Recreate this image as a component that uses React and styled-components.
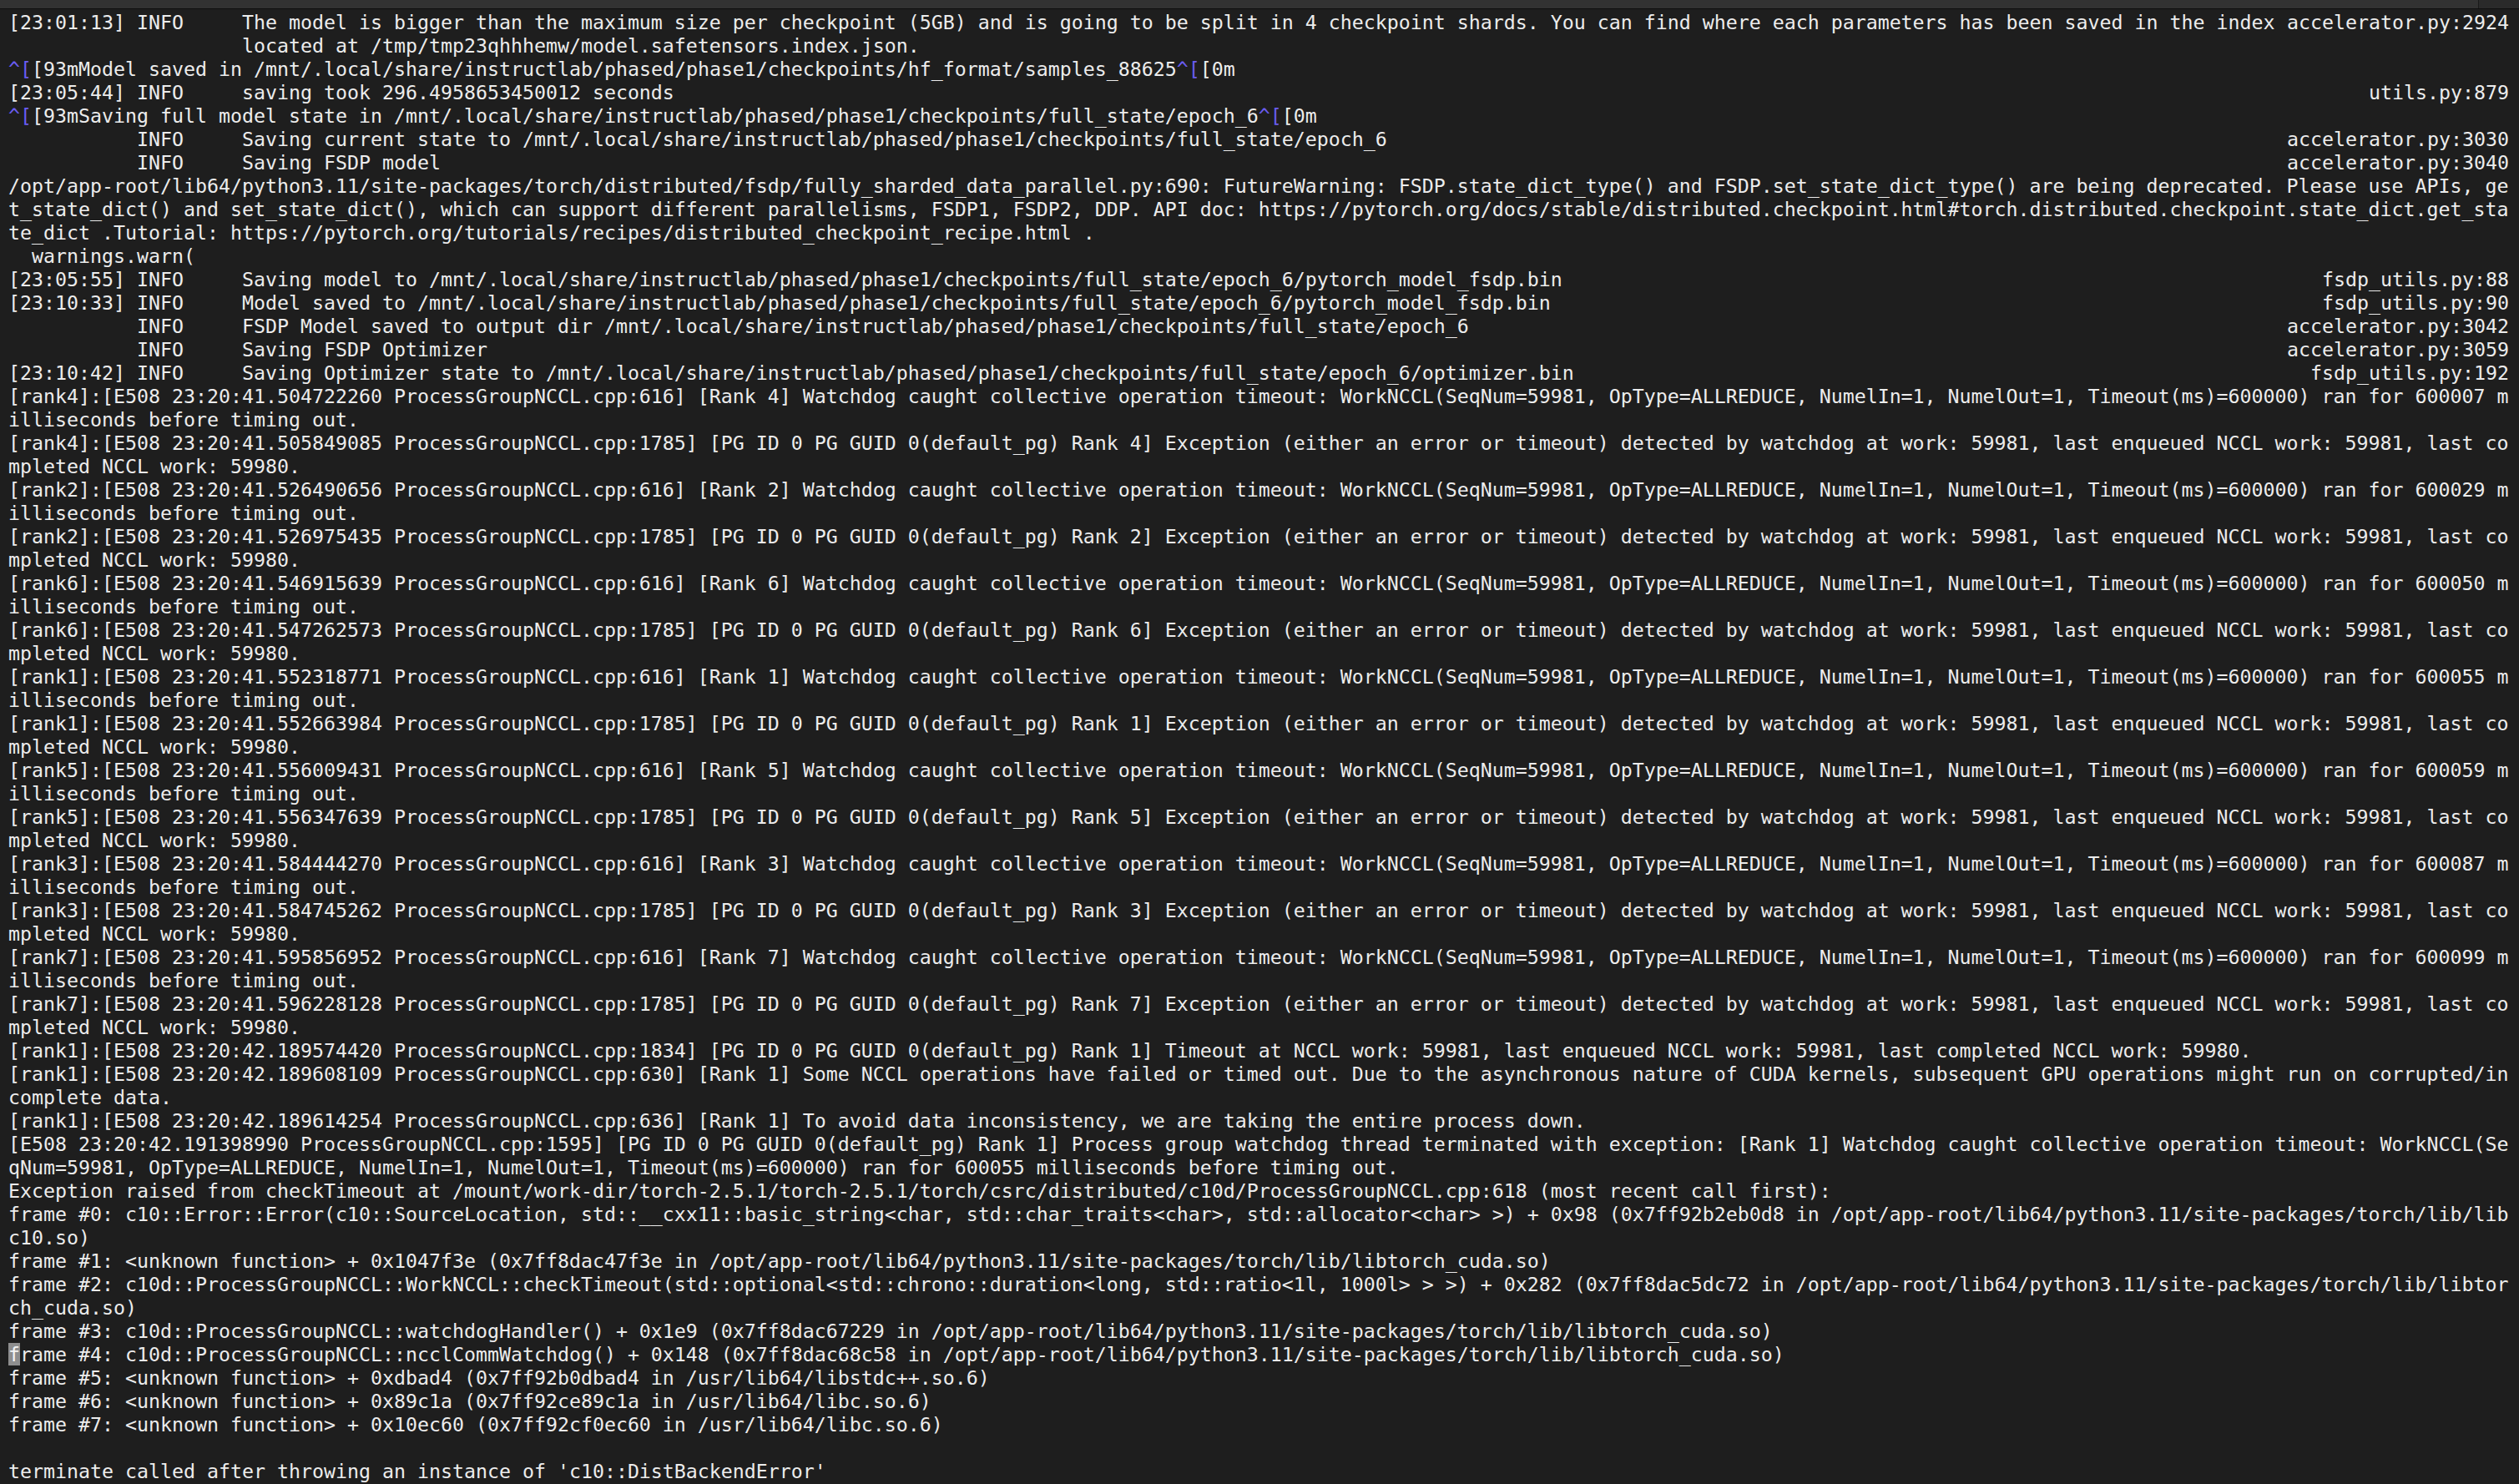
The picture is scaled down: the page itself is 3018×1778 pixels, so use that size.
import React from "react";
import styled, { createGlobalStyle } from "styled-components";

const GlobalStyle = createGlobalStyle`
  html, body {
    margin: 0;
    padding: 0;
    background: #1e1e1e;
  }
`;

const Window = styled.div`
  width: 100vw;
  height: 100vh;
  display: flex;
  flex-direction: column;
  background: #1e1e1e;
  overflow: hidden;
`;

const TitleBar = styled.div`
  display: flex;
  height: 10px;
  flex: none;
  border-bottom: 1px solid #0e0e0e;
`;

const BarMain = styled.div`
  flex: 1;
  background: #323232;
`;

const BarSide = styled.div`
  width: 48px;
  background: #2a2a2a;
  border-left: 1px solid #1a1a1a;
`;

const Terminal = styled.div`
  padding: 2px 12px 0 10px;
  font-family: "DejaVu Sans Mono", "Liberation Mono", monospace;
  font-size: 23.25px;
  line-height: 28px;
  color: #ececec;
`;

const Screen = styled.div`
  width: 2996px;
  display: flex;
  flex-direction: column;
`;

const Line = styled.div`
  height: 28px;
  white-space: pre;
  display: flex;
  justify-content: space-between;
`;

const Ctrl = styled.span`
  color: #6a5cf0;
`;

const Cursor = styled.span`
  background: #8e8e8e;
  color: #f4f4f4;
`;

const Esc = ({ children }) => (
  <>
    <Ctrl>^[</Ctrl>
    {children}
  </>
);

const ranks = [
  ["4", "504722260", "600007", "505849085"],
  ["2", "526490656", "600029", "526975435"],
  ["6", "546915639", "600050", "547262573"],
  ["1", "552318771", "600055", "552663984"],
  ["5", "556009431", "600059", "556347639"],
  ["3", "584444270", "600087", "584745262"],
  ["7", "595856952", "600099", "596228128"],
];

const P = "/mnt/.local/share/instructlab/phased/phase1/checkpoints";
const LIB = "/opt/app-root/lib64/python3.11/site-packages/torch/lib";

const head = [
  { l: "[23:01:13] INFO     The model is bigger than the maximum size per checkpoint (5GB) and is going to be split in 4 checkpoint shards. You can find where each parameters has been saved in the index", r: "accelerator.py:2924" },
  { l: "                    located at /tmp/tmp23qhhhemw/model.safetensors.index.json." },
  { node: <><Esc>[93mModel saved in {P}/hf_format/samples_88625</Esc><Esc>[0m</Esc></> },
  { l: "[23:05:44] INFO     saving took 296.4958653450012 seconds", r: "utils.py:879" },
  { node: <><Esc>[93mSaving full model state in {P}/full_state/epoch_6</Esc><Esc>[0m</Esc></> },
  { l: `           INFO     Saving current state to ${P}/full_state/epoch_6`, r: "accelerator.py:3030" },
  { l: "           INFO     Saving FSDP model", r: "accelerator.py:3040" },
  { l: "/opt/app-root/lib64/python3.11/site-packages/torch/distributed/fsdp/fully_sharded_data_parallel.py:690: FutureWarning: FSDP.state_dict_type() and FSDP.set_state_dict_type() are being deprecated. Please use APIs, ge" },
  { l: "t_state_dict() and set_state_dict(), which can support different parallelisms, FSDP1, FSDP2, DDP. API doc: https://pytorch.org/docs/stable/distributed.checkpoint.html#torch.distributed.checkpoint.state_dict.get_sta" },
  { l: "te_dict .Tutorial: https://pytorch.org/tutorials/recipes/distributed_checkpoint_recipe.html ." },
  { l: "  warnings.warn(" },
  { l: `[23:05:55] INFO     Saving model to ${P}/full_state/epoch_6/pytorch_model_fsdp.bin`, r: "fsdp_utils.py:88" },
  { l: `[23:10:33] INFO     Model saved to ${P}/full_state/epoch_6/pytorch_model_fsdp.bin`, r: "fsdp_utils.py:90" },
  { l: `           INFO     FSDP Model saved to output dir ${P}/full_state/epoch_6`, r: "accelerator.py:3042" },
  { l: "           INFO     Saving FSDP Optimizer", r: "accelerator.py:3059" },
  { l: `[23:10:42] INFO     Saving Optimizer state to ${P}/full_state/epoch_6/optimizer.bin`, r: "fsdp_utils.py:192" },
];

const rankLines = ranks.flatMap(([r, t1, ms, t2]) => [
  { l: `[rank${r}]:[E508 23:20:41.${t1} ProcessGroupNCCL.cpp:616] [Rank ${r}] Watchdog caught collective operation timeout: WorkNCCL(SeqNum=59981, OpType=ALLREDUCE, NumelIn=1, NumelOut=1, Timeout(ms)=600000) ran for ${ms} m` },
  { l: "illiseconds before timing out." },
  { l: `[rank${r}]:[E508 23:20:41.${t2} ProcessGroupNCCL.cpp:1785] [PG ID 0 PG GUID 0(default_pg) Rank ${r}] Exception (either an error or timeout) detected by watchdog at work: 59981, last enqueued NCCL work: 59981, last co` },
  { l: "mpleted NCCL work: 59980." },
]);

const tail = [
  { l: "[rank1]:[E508 23:20:42.189574420 ProcessGroupNCCL.cpp:1834] [PG ID 0 PG GUID 0(default_pg) Rank 1] Timeout at NCCL work: 59981, last enqueued NCCL work: 59981, last completed NCCL work: 59980." },
  { l: "[rank1]:[E508 23:20:42.189608109 ProcessGroupNCCL.cpp:630] [Rank 1] Some NCCL operations have failed or timed out. Due to the asynchronous nature of CUDA kernels, subsequent GPU operations might run on corrupted/in" },
  { l: "complete data." },
  { l: "[rank1]:[E508 23:20:42.189614254 ProcessGroupNCCL.cpp:636] [Rank 1] To avoid data inconsistency, we are taking the entire process down." },
  { l: "[E508 23:20:42.191398990 ProcessGroupNCCL.cpp:1595] [PG ID 0 PG GUID 0(default_pg) Rank 1] Process group watchdog thread terminated with exception: [Rank 1] Watchdog caught collective operation timeout: WorkNCCL(Se" },
  { l: "qNum=59981, OpType=ALLREDUCE, NumelIn=1, NumelOut=1, Timeout(ms)=600000) ran for 600055 milliseconds before timing out." },
  { l: "Exception raised from checkTimeout at /mount/work-dir/torch-2.5.1/torch-2.5.1/torch/csrc/distributed/c10d/ProcessGroupNCCL.cpp:618 (most recent call first):" },
  { l: `frame #0: c10::Error::Error(c10::SourceLocation, std::__cxx11::basic_string<char, std::char_traits<char>, std::allocator<char> >) + 0x98 (0x7ff92b2eb0d8 in ${LIB}/lib` },
  { l: "c10.so)" },
  { l: `frame #1: <unknown function> + 0x1047f3e (0x7ff8dac47f3e in ${LIB}/libtorch_cuda.so)` },
  { l: `frame #2: c10d::ProcessGroupNCCL::WorkNCCL::checkTimeout(std::optional<std::chrono::duration<long, std::ratio<1l, 1000l> > >) + 0x282 (0x7ff8dac5dc72 in ${LIB}/libtor` },
  { l: "ch_cuda.so)" },
  { l: `frame #3: c10d::ProcessGroupNCCL::watchdogHandler() + 0x1e9 (0x7ff8dac67229 in ${LIB}/libtorch_cuda.so)` },
  { node: <><Cursor>f</Cursor>{`rame #4: c10d::ProcessGroupNCCL::ncclCommWatchdog() + 0x148 (0x7ff8dac68c58 in ${LIB}/libtorch_cuda.so)`}</> },
  { l: "frame #5: <unknown function> + 0xdbad4 (0x7ff92b0dbad4 in /usr/lib64/libstdc++.so.6)" },
  { l: "frame #6: <unknown function> + 0x89c1a (0x7ff92ce89c1a in /usr/lib64/libc.so.6)" },
  { l: "frame #7: <unknown function> + 0x10ec60 (0x7ff92cf0ec60 in /usr/lib64/libc.so.6)" },
  { l: "" },
  { l: "terminate called after throwing an instance of 'c10::DistBackendError'" },
];

const lines = [...head, ...rankLines, ...tail];

export default function App() {
  return (
    <>
      <GlobalStyle />
      <Window>
        <TitleBar>
          <BarMain />
          <BarSide />
        </TitleBar>
        <Terminal>
          <Screen>
            {lines.map((ln, i) => (
              <Line key={i}>
                {ln.node ? <span>{ln.node}</span> : <span>{ln.l}</span>}
                {ln.r && <span>{ln.r}</span>}
              </Line>
            ))}
          </Screen>
        </Terminal>
      </Window>
    </>
  );
}
